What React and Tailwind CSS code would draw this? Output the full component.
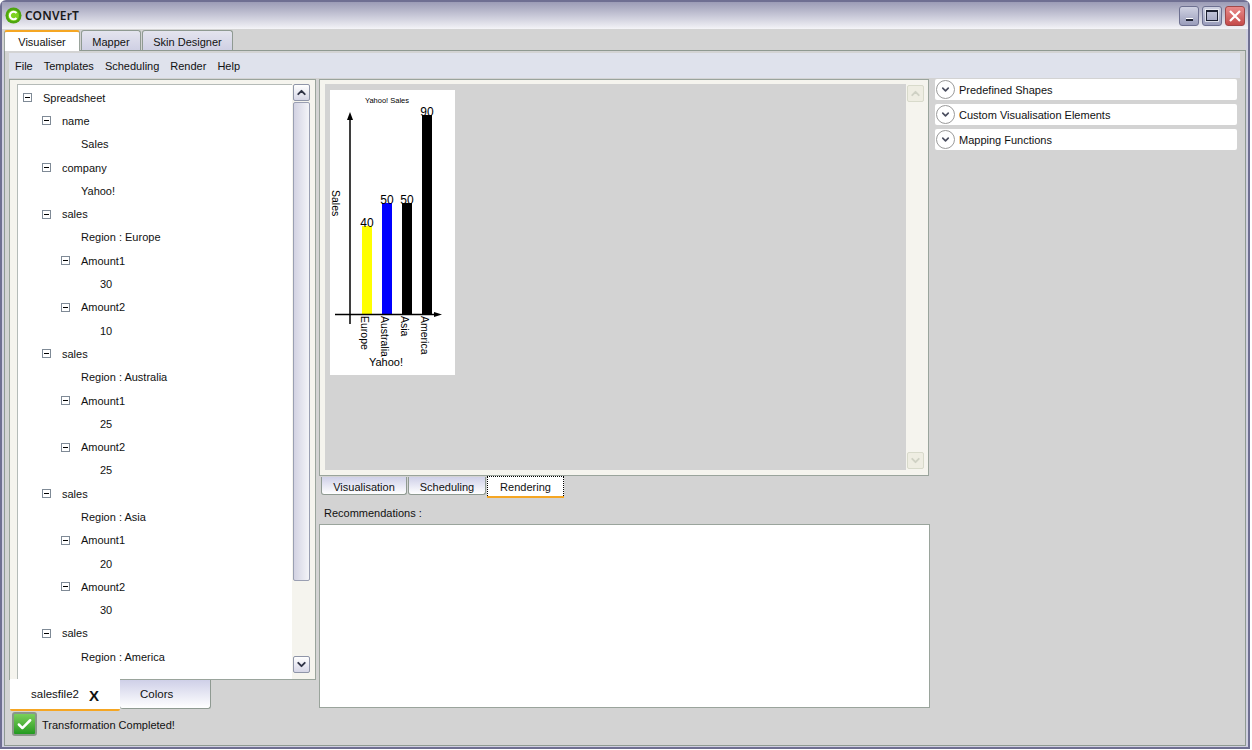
import React from 'react';
import { ChevronUp, ChevronDown, Check } from 'lucide-react';

const treeRows = [
  [0, 'Spreadsheet', true], [1, 'name', true], [2, 'Sales'], [1, 'company', true], [2, 'Yahoo!'],
  [1, 'sales', true], [2, 'Region : Europe'], [2, 'Amount1', true], [3, '30'], [2, 'Amount2', true], [3, '10'],
  [1, 'sales', true], [2, 'Region : Australia'], [2, 'Amount1', true], [3, '25'], [2, 'Amount2', true], [3, '25'],
  [1, 'sales', true], [2, 'Region : Asia'], [2, 'Amount1', true], [3, '20'], [2, 'Amount2', true], [3, '30'],
  [1, 'sales', true], [2, 'Region : America'],
];

const indents = ['pl-[5px]', 'pl-[24px]', 'pl-[43px]', 'pl-[62px]'];

const ScrollButton = ({ up, faded }) => {
  const Icon = up ? ChevronUp : ChevronDown;
  return (
    <div className={`w-[17px] h-[17px] shrink-0 flex items-center justify-center rounded-[2px] border ${faded ? 'border-[#d8dacb] bg-[#eeede2]' : 'border-[#8f95a8] bg-gradient-to-b from-white to-[#d6d6e6]'}`}>
      <Icon size={13} strokeWidth={3.5} className={faded ? 'text-[#cfd1c4]' : 'text-[#2f3346]'} />
    </div>
  );
};

const TopTab = ({ label, width, active }) => (
  <div className={`${width} flex items-center justify-center rounded-t-[3px] border border-b-0 ${active ? 'h-[21px] -mb-[1px] relative border-[#9aa49c] border-t-[#f5a623] border-t-2 bg-white pt-[2px]' : 'h-[20px] border-[#8f9a92] bg-gradient-to-b from-[#e4e4ee] to-[#cfd0e4] pt-[3px]'}`}>
    {label}
  </div>
);

const SubTab = ({ label, width, active }) => (
  <div className={`${width} flex items-center justify-center ${active ? 'h-[20px] pt-[2px] bg-white border border-dotted border-black border-b-0 shadow-[0_2px_0_#f5a623]' : 'h-[18px] mt-[1px] pt-[3px] rounded-b-[3px] border border-t-0 border-[#8f9a92] bg-gradient-to-b from-[#cfd0e8] to-white'}`}>
    {label}
  </div>
);

const TreeRow = ({ level, label, toggle }) => (
  <div className={`h-[23.3px] flex items-center ${indents[level]}`}>
    {toggle ? (
      <div className="w-[9px] h-[9px] border border-[#7f8a96] flex items-center justify-center mr-[11px] bg-white">
        <div className="w-[5px] h-[1px] bg-black" />
      </div>
    ) : (
      <div className="w-[20px]" />
    )}
    <span className="pt-[1px]">{label}</span>
  </div>
);

const Expander = ({ label }) => (
  <div className="h-[21px] bg-white rounded-[2px] flex items-center pl-[1px]">
    <div className="w-[19px] h-[19px] rounded-full border border-[#9a9a9a] flex items-center justify-center mr-[4px]">
      <ChevronDown size={11} strokeWidth={3.5} className="text-[#4a4d5e]" />
    </div>
    <span className="pt-[2px]">{label}</span>
  </div>
);

const Chart = () => (
  <svg width="125" height="285" className="bg-white block" fontFamily="'Liberation Sans', sans-serif">
    <text x="57" y="13" fontSize="7.5" textAnchor="middle">Yahoo! Sales</text>
    <rect x="32" y="136" width="10" height="88" fill="#ffff00" />
    <rect x="52" y="113" width="10" height="111" fill="#0000ff" />
    <rect x="72" y="113" width="10" height="111" fill="#000" />
    <rect x="92" y="25" width="10" height="199" fill="#000" />
    <path d="M20 30V234M5 224.5H105" stroke="#000" strokeWidth="1.5" fill="none" />
    <path d="M17 30L20 22L23 30ZM104 222L112 224.5L104 227Z" fill="#000" />
    <text x="37" y="137" fontSize="12" textAnchor="middle">40</text>
    <text x="57" y="114" fontSize="12" textAnchor="middle">50</text>
    <text x="77" y="114" fontSize="12" textAnchor="middle">50</text>
    <text x="97" y="26" fontSize="12" textAnchor="middle">90</text>
    <text transform="translate(31,226) rotate(90)" fontSize="10.5">Europe</text>
    <text transform="translate(51,226) rotate(90)" fontSize="10.5">Australia</text>
    <text transform="translate(71,226) rotate(90)" fontSize="10.5">Asia</text>
    <text transform="translate(91,226) rotate(90)" fontSize="10.5">America</text>
    <text transform="translate(2,100) rotate(90)" fontSize="10.5">Sales</text>
    <text x="56" y="276" fontSize="11" textAnchor="middle">Yahoo!</text>
  </svg>
);

export default function App() {
  return (
    <div className="w-[1252px] h-[750px] bg-white text-[11px] leading-none text-[#111] font-['Liberation_Sans',sans-serif] overflow-hidden">
      <div className="w-[1250px] h-[749px] border-2 border-[#6f6f92] rounded-t-[6px] bg-[#d0d0e0] flex flex-col">
        {/* Title bar */}
        <div className="h-[27px] shrink-0 flex items-center pl-[3px] pr-[3px] bg-gradient-to-b from-[#9c9cb6] to-[#f4f4f8]">
          <svg width="17" height="17" viewBox="0 0 17 17">
            <circle cx="8.5" cy="8.5" r="8" fill="#4ea60f" />
            <circle cx="8.5" cy="8.5" r="5.5" fill="#7ed321" />
            <path d="M11.5 6A3.8 3.8 0 1 0 11.5 11" stroke="#fff" strokeWidth="2" fill="none" />
          </svg>
          <span className="ml-[3px] text-[12px] font-['Noto_Sans',sans-serif] font-semibold tracking-[0.2px] text-[#1a1a1a]">CONVErT</span>
          <div className="ml-auto flex gap-[3px]">
            <div className="w-[20px] h-[20px] rounded-[3px] border border-[#6d7090] bg-gradient-to-b from-[#d0d2e2] to-[#9a9dbb] flex items-end justify-center pb-[4px]">
              <div className="w-[7px] h-[3px] bg-[#1c2030] border-t border-white" />
            </div>
            <div className="w-[20px] h-[20px] rounded-[3px] border border-[#6d7090] bg-gradient-to-b from-[#d0d2e2] to-[#9a9dbb] flex items-center justify-center">
              <div className="w-[12px] h-[11px] border border-[#1c2030] border-t-2 outline outline-white/60" />
            </div>
            <div className="w-[20px] h-[20px] rounded-[3px] border border-[#a04848] bg-gradient-to-b from-[#e98a8a] to-[#c54a4a] flex items-center justify-center">
              <svg width="14" height="14" viewBox="0 0 14 14"><path d="M2 2L12 12M12 2L2 12" stroke="#fff" strokeWidth="2.2" /></svg>
            </div>
          </div>
        </div>

        {/* Top tabs */}
        <div className="h-[21px] shrink-0 flex items-end gap-[1px] pl-[2px] bg-[#d3d3d3] mr-[2px]">
          <TopTab label="Visualiser" width="w-[76px]" active />
          <TopTab label="Mapper" width="w-[60px]" />
          <TopTab label="Skin Designer" width="w-[91px]" />
        </div>

        {/* Tab page */}
        <div className="flex-1 min-h-0 mx-[2px] mb-[1px] bg-[#d3d3d3] border border-[#8f9a92] flex flex-col pl-[4px] pr-[4px] pt-[2px]">
          <div className="h-[25px] shrink-0 bg-[#dfe2ec] flex items-center gap-[11px] pl-[6px] pt-[2px] mr-[1px]">
            <span>File</span><span>Templates</span><span>Scheduling</span><span>Render</span><span>Help</span>
          </div>
          <div className="flex-1 min-h-0 flex pt-[1px]">
            {/* Left column */}
            <div className="w-[307px] shrink-0 flex flex-col">
              <div className="h-[601px] shrink-0 border border-[#9aa49c] bg-[#f5f4ee] flex pl-[7px] pt-[4px] pr-[5px]">
                <div className="flex-1 min-w-0 bg-white border-l border-t border-[#b5bbb8] pt-[1px] overflow-hidden">
                  {treeRows.map((r, i) => <TreeRow key={i} level={r[0]} label={r[1]} toggle={r[2]} />)}
                </div>
                <div className="w-[18px] shrink-0 flex flex-col pl-[1px] pb-[6px]">
                  <ScrollButton up />
                  <div className="flex-1 relative">
                    <div className="h-[479px] mt-[1px] rounded-[2px] border border-[#9a9fb2] bg-gradient-to-r from-[#d2d2e2] to-[#f4f4f8]" />
                  </div>
                  <ScrollButton />
                </div>
              </div>
              <div className="flex items-start">
                <div className="w-[110px] h-[32px] -mt-[1px] ml-[1px] bg-white border-b-2 border-[#f5a623] rounded-b-[2px] flex items-center justify-center gap-[10px] text-[11.5px] pt-[2px]">
                  <span>salesfile2</span><span className="font-bold text-[15px]">X</span>
                </div>
                <div className="w-[91px] h-[29px] border border-t-0 border-l-0 border-[#8f9a92] rounded-b-[3px] bg-gradient-to-b from-[#cfd0e8] to-white flex items-center pl-[20px] pt-[2px] text-[11.5px]">Colors</div>
              </div>
              <div className="flex items-center gap-[5px] mt-[1px] ml-[3px]">
                <div className="w-[25px] h-[24px] rounded-[3px] border-2 border-[#8a978a] bg-gradient-to-b from-[#7ad05a] to-[#1f9a1f] flex items-center justify-center">
                  <Check size={17} strokeWidth={3.5} className="text-white" />
                </div>
                <span className="pt-[2px]">Transformation Completed!</span>
              </div>
            </div>

            {/* Middle column */}
            <div className="w-[611px] shrink-0 ml-[3px] flex flex-col">
              <div className="h-[397px] w-[610px] shrink-0 border border-[#9aa49c] bg-[#f5f4ee] flex pl-[5px] pt-[4px] pb-[5px] pr-[4px]">
                <div className="flex-1 min-w-0 bg-[#d3d3d3] pl-[5px] pt-[6px]"><Chart /></div>
                <div className="w-[18px] shrink-0 flex flex-col justify-between pl-[1px] py-[1px]">
                  <ScrollButton up faded />
                  <ScrollButton faded />
                </div>
              </div>
              <div className="flex items-start gap-[1px] ml-[2px]">
                <SubTab label="Visualisation" width="w-[86px]" />
                <SubTab label="Scheduling" width="w-[78px]" />
                <SubTab label="Rendering" width="w-[77px]" active />
              </div>
              <div className="mt-[12px] ml-[5px] h-[12px]">Recommendations :</div>
              <div className="h-[184px] w-[611px] mt-[4px] bg-white border border-[#9aa49c]" />
            </div>

            {/* Right column */}
            <div className="w-[302px] shrink-0 ml-[5px] flex flex-col gap-[4px]">
              <Expander label="Predefined Shapes" />
              <Expander label="Custom Visualisation Elements" />
              <Expander label="Mapping Functions" />
            </div>
          </div>
        </div>
      </div>
    </div>
  );
}
